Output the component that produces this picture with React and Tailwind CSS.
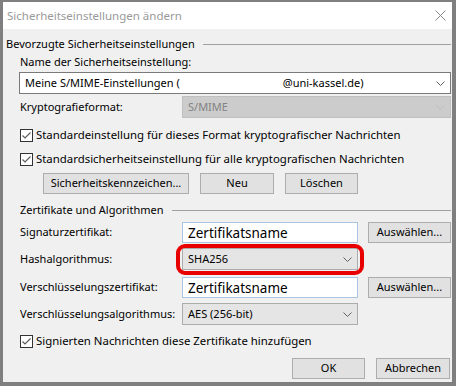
import React from 'react';

const Chevron = ({ color = '#606060' }) => (
  <svg width="9" height="5" viewBox="0 0 9 5" fill="none">
    <path d="M0.5 0.5 L4.5 4.5 L8.5 0.5" stroke={color} strokeWidth="1" />
  </svg>
);

const Checkbox = ({ label }) => (
  <div className="h-[18px] flex items-center pl-[17px]">
    <span className="w-[13px] h-[13px] border border-[#333333] bg-white flex items-center justify-center shrink-0">
      <svg width="11" height="11" viewBox="0 0 11 11">
        <path d="M1.5 5.5 L4 8 L9.5 2.5" stroke="#5c5c5c" fill="none" strokeWidth="1.2" />
      </svg>
    </span>
    <span className="ml-[3px] text-[11.4px]">{label}</span>
  </div>
);

const Button = ({ children, className = '' }) => (
  <div className={`h-[21px] border border-[#adadad] bg-[#e1e1e1] flex items-center justify-center ${className}`}>
    {children}
  </div>
);

const GroupHeader = ({ title, pl }) => (
  <div className={`h-4 flex items-center ${pl}`}>
    <span>{title}</span>
    <div className="flex-1 ml-2 border-t border-[#a0a0a0]" />
  </div>
);

const Label = ({ children }) => <span className="w-[162px] shrink-0">{children}</span>;

const Combo = ({ value, className = '' }) => (
  <div className={`h-[22px] w-[176px] border border-[#acacac] bg-[#e5e5e5] flex items-center justify-between pl-[5px] pr-[5px] ${className}`}>
    <span>{value}</span>
    <Chevron />
  </div>
);

const CertField = () => (
  <div className="h-[21px] w-[176px] border border-[#aac4e2] bg-white flex items-center pl-[5px] overflow-hidden">
    <span className="text-[13.5px] leading-none pt-[3px]">Zertifikatsname</span>
  </div>
);

export default function App() {
  return (
    <div
      className="w-[456px] h-[386px] bg-[#7f7f7f] pt-[2px] pl-[3px] pr-[4px] pb-[4px] text-[11px] text-black"
      style={{ fontFamily: '"Segoe UI", "Noto Sans", sans-serif' }}
    >
      <div className="h-full flex flex-col bg-[#f0f0f0]">
        <div className="h-[27px] bg-white flex items-center justify-between pl-[4px] pr-[6px]">
          <span className="text-[11.5px] text-[#999999]">Sicherheitseinstellungen ändern</span>
          <svg width="11" height="11" viewBox="0 0 11 11">
            <path d="M0.5 0.5 L10.5 10.5 M10.5 0.5 L0.5 10.5" stroke="#8a8a8a" strokeWidth="1" />
          </svg>
        </div>

        <div className="flex flex-col pr-[1px]">
          <div className="mt-[7px]">
            <GroupHeader title="Bevorzugte Sicherheitseinstellungen" pl="pl-[3px]" />
          </div>
          <div className="mt-[2px] h-4 flex items-center pl-[17px]">Name der Sicherheitseinstellung:</div>
          <div className="mt-[2px] ml-[16px] h-[22px] border border-[#7a7a7a] bg-white flex items-center justify-between pl-[5px] pr-[5px]">
            <span>
              Meine S/MIME-Einstellungen (<span className="inline-block w-[103px]" />@uni-kassel.de)
            </span>
            <Chevron />
          </div>
          <div className="mt-[2px] flex items-center pl-[17px]">
            <Label>Kryptografieformat:</Label>
            <div className="flex-1 h-[22px] border border-[#bfbfbf] bg-[#cccccc] flex items-center justify-between pl-[5px] pr-[5px] text-[#838383]">
              <span>S/MIME</span>
              <Chevron color="#bdbdbd" />
            </div>
          </div>

          <div className="mt-[8px] flex flex-col gap-[6px]">
            <Checkbox label="Standardeinstellung für dieses Format kryptografischer Nachrichten" />
            <Checkbox label="Standardsicherheitseinstellung für alle kryptografischen Nachrichten" />
          </div>

          <div className="mt-[5px] flex pl-[40px] gap-[11px]">
            <Button className="w-[146px]">Sicherheitskennzeichen...</Button>
            <Button className="w-[74px]">Neu</Button>
            <Button className="w-[73px]">Löschen</Button>
          </div>

          <div className="mt-[8px]">
            <GroupHeader title="Zertifikate und Algorithmen" pl="pl-[17px]" />
          </div>

          <div className="mt-[4px] flex items-center pl-[17px]">
            <Label>Signaturzertifikat:</Label>
            <CertField />
            <Button className="w-[83px] ml-[10px]">Auswählen...</Button>
          </div>

          <div className="mt-[5px] flex items-center pl-[17px]">
            <Label>Hashalgorithmus:</Label>
            <div className="relative">
              <Combo value="SHA256" />
              <div className="absolute left-[-6px] right-[-6px] top-[-4px] bottom-[-5px] border-4 border-[#e80000] rounded-[9px]" />
            </div>
          </div>

          <div className="mt-[7px] flex items-center pl-[17px]">
            <Label>Verschlüsselungszertifikat:</Label>
            <CertField />
            <Button className="w-[83px] ml-[10px]">Auswählen...</Button>
          </div>

          <div className="mt-[5px] flex items-center pl-[17px]">
            <Label>Verschlüsselungsalgorithmus:</Label>
            <Combo value="AES (256-bit)" className="h-[21px]" />
          </div>

          <div className="mt-[7px]">
            <Checkbox label="Signierten Nachrichten diese Zertifikate hinzufügen" />
          </div>

          <div className="mt-[8px] flex justify-end gap-[11px] pr-[1px]">
            <Button className="w-[73px]">OK</Button>
            <Button className="w-[74px]">Abbrechen</Button>
          </div>
        </div>
      </div>
    </div>
  );
}
